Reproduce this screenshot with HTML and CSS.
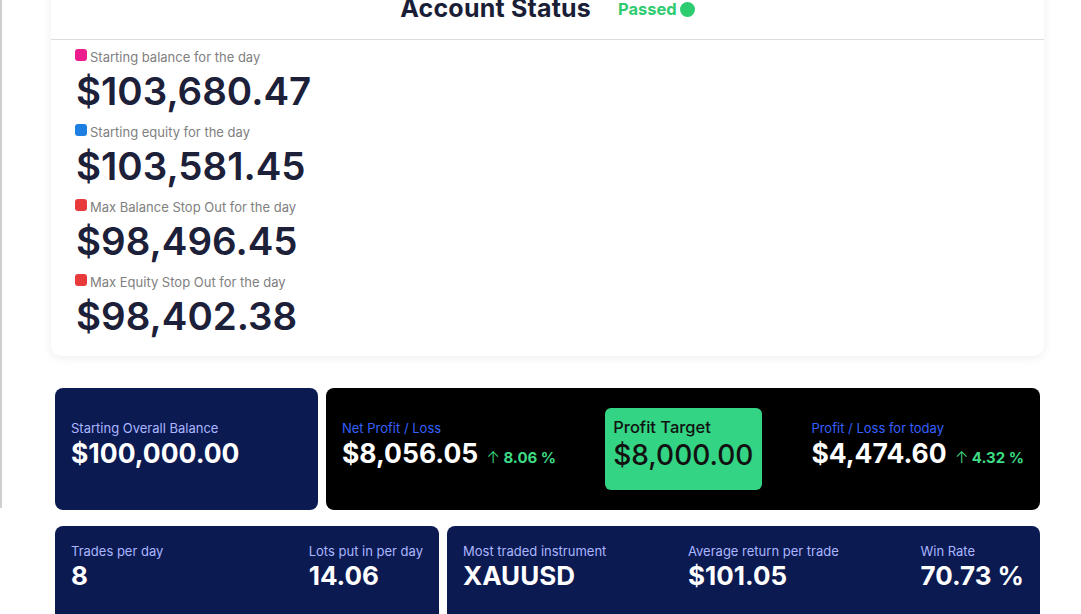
FILE: index.html
```html
<!DOCTYPE html>
<html lang="en">
<head>
    <meta charset="UTF-8">
    <meta name="viewport" content="width=device-width, initial-scale=1.0">
    <title>Account Status</title>
    <link rel="stylesheet" href="styles.css">
</head>
<body>
    <div class="layout">
        <div class="rail"></div>

        <main class="content">
            <section class="status-card">
                <div class="status-head">
                    <h2>Account Status</h2>
                    <span class="passed">Passed <i class="dot"></i></span>
                </div>

                <div class="levels">
                    <div class="level">
                        <div class="level-label"><span class="mark pink"></span>Starting balance for the day</div>
                        <div class="level-value">$103,680.47</div>
                    </div>
                    <div class="level">
                        <div class="level-label"><span class="mark blue"></span>Starting equity for the day</div>
                        <div class="level-value">$103,581.45</div>
                    </div>
                    <div class="level">
                        <div class="level-label"><span class="mark red"></span>Max Balance Stop Out for the day</div>
                        <div class="level-value">$98,496.45</div>
                    </div>
                    <div class="level">
                        <div class="level-label"><span class="mark red"></span>Max Equity Stop Out for the day</div>
                        <div class="level-value">$98,402.38</div>
                    </div>
                </div>
            </section>

            <section class="stats-row top-row">
                <div class="stat-card navy">
                    <div class="stat">
                        <div class="stat-label">Starting Overall Balance</div>
                        <div class="stat-value">$100,000.00</div>
                    </div>
                </div>

                <div class="stat-card dark spread">
                    <div class="stat">
                        <div class="stat-label blue-label">Net Profit / Loss</div>
                        <div class="stat-value">$8,056.05 <span class="change"><span class="arrow">↑</span> 8.06 %</span></div>
                    </div>

                    <div class="target">
                        <div class="target-label">Profit Target</div>
                        <div class="target-value">$8,000.00</div>
                    </div>

                    <div class="stat">
                        <div class="stat-label blue-label">Profit / Loss for today</div>
                        <div class="stat-value">$4,474.60 <span class="change"><span class="arrow">↑</span> 4.32 %</span></div>
                    </div>
                </div>
            </section>

            <section class="stats-row bottom-row">
                <div class="stat-card navy spread small">
                    <div class="stat">
                        <div class="stat-label">Trades per day</div>
                        <div class="stat-value">8</div>
                    </div>
                    <div class="stat">
                        <div class="stat-label">Lots put in per day</div>
                        <div class="stat-value">14.06</div>
                    </div>
                </div>

                <div class="stat-card navy spread small">
                    <div class="stat">
                        <div class="stat-label">Most traded instrument</div>
                        <div class="stat-value">XAUUSD</div>
                    </div>
                    <div class="stat">
                        <div class="stat-label">Average return per trade</div>
                        <div class="stat-value">$101.05</div>
                    </div>
                    <div class="stat">
                        <div class="stat-label">Win Rate</div>
                        <div class="stat-value">70.73 %</div>
                    </div>
                </div>
            </section>
        </main>
    </div>
</body>
</html>
```

FILE: styles.css
```css
body {
    font-family: Inter, "Open Sans", sans-serif;
    background-color: #fff;
    color: #1c2038;
    margin: 0;
    overflow: hidden;
}

.layout {
    display: flex;
    align-items: flex-start;
}

.rail {
    width: 2px;
    height: 508px;
    background: #cfcfcf;
    flex-shrink: 0;
}

.content {
    flex: 1;
    padding: 0 37px 0 49px;
}

/* account status card */

.status-card {
    margin-top: -30px;
    background: #fff;
    border-radius: 10px;
    box-shadow: 0 2px 10px rgba(30, 40, 90, 0.08);
}

.status-head {
    display: flex;
    justify-content: center;
    align-items: center;
    gap: 27px;
    padding: 23px 0 16px;
    border-bottom: 1px solid #dcdcdc;
}

.status-head h2 {
    margin: 0;
    font-size: 25px;
    line-height: 30px;
    font-weight: 700;
    letter-spacing: 0.2px;
    color: #1a1e36;
}

.passed {
    display: flex;
    align-items: center;
    gap: 3px;
    font-size: 16.5px;
    line-height: 20px;
    font-weight: 700;
    color: #2ecc71;
    margin-top: 2px;
}

.dot {
    width: 15px;
    height: 15px;
    border-radius: 50%;
    background: #2ecc71;
}

.levels {
    padding: 8px 24px 8px;
}

.level-label {
    display: flex;
    align-items: center;
    gap: 3px;
    font-size: 13px;
    line-height: 18px;
    color: #808080;
}

.mark {
    width: 12px;
    height: 12px;
    border-radius: 3px;
    margin-top: -4px;
}

.mark.pink { background: #ec1c8f; }
.mark.blue { background: #1e7fe3; }
.mark.red { background: #e83a3a; }

.level-value {
    font-size: 38.5px;
    line-height: 51px;
    padding-bottom: 6px;
    font-weight: 600;
    color: #1c2038;
    padding-left: 1px;
}

/* stat cards */

.stats-row {
    display: grid;
    gap: 8px;
    margin: 0 4px;
}

.top-row {
    grid-template-columns: 263px 1fr;
    margin-top: 32px;
}

.bottom-row {
    grid-template-columns: 384px 1fr;
    margin-top: 16px;
}

.stat-card {
    height: 122px;
    box-sizing: border-box;
    border-radius: 8px;
    padding: 32px 16px;
    color: #fff;
}

.stat-card.navy {
    background: #0c1a52;
}

.stat-card.dark {
    background: #000;
    padding: 20px 16px;
}

.stat-card.small {
    padding-top: 17px;
}

.spread {
    display: flex;
    justify-content: space-between;
    align-items: flex-start;
}

.dark .stat {
    padding-top: 12px;
}

.stat-label {
    font-size: 13px;
    line-height: 16px;
    color: #aab6ff;
}

.stat-label.blue-label {
    color: #3560ff;
}

.stat-value {
    font-size: 26.5px;
    line-height: 34px;
    font-weight: 700;
    color: #fff;
    white-space: nowrap;
}

.small .stat-value {
    font-size: 26px;
}

.change {
    font-size: 15px;
    font-weight: 700;
    color: #3ddc84;
    margin-left: 2px;
}

.arrow {
    font-weight: 300;
    font-size: 16px;
}

.target {
    width: 157px;
    height: 82px;
    box-sizing: border-box;
    background: #33d483;
    border-radius: 6px;
    padding: 9px 8px;
    color: #111;
}

.target-label {
    font-size: 16.5px;
    line-height: 20px;
    font-weight: 500;
}

.target-value {
    font-size: 28px;
    line-height: 36px;
    font-weight: 500;
}
```
